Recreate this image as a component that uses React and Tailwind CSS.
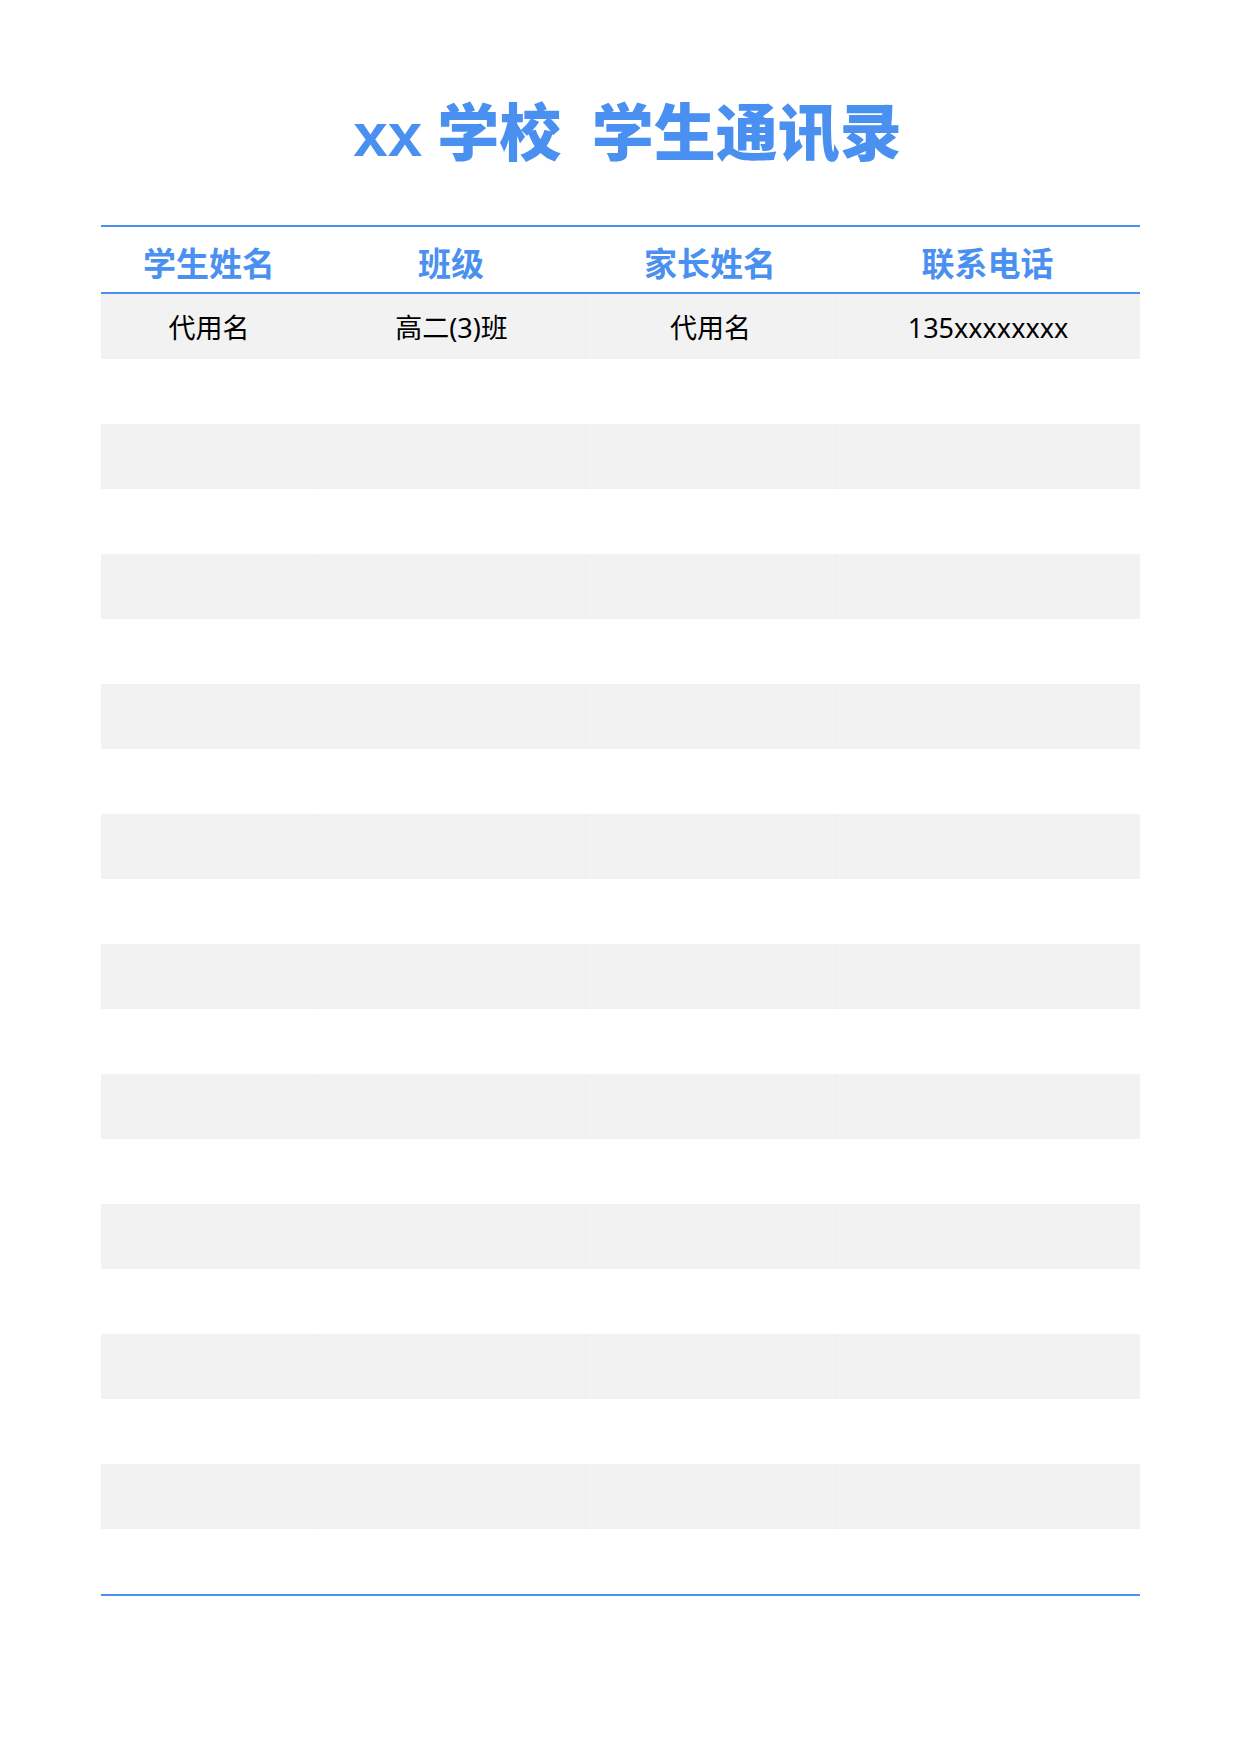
// App.jsx

import React from "react";

const headers = ["学生姓名", "班级", "家长姓名", "联系电话"];

const rows = Array.from({ length: 20 }, (_, i) =>
  i === 0 ? ["代用名", "高二(3)班", "代用名", "135xxxxxxxx"] : ["", "", "", ""]
);

export default function App() {
  return (
    <div
      className="w-[1241px] min-h-[1754px] bg-white px-[101px] pt-[104px]"
      style={{ fontFamily: '"Noto Sans", "Noto Sans CJK SC", sans-serif' }}
    >
      {/* Title */}
      <h1
        className="pl-[14px] text-center text-[62px] leading-[62px] font-black text-[#4a90f0] whitespace-pre [word-spacing:-2px]"
        style={{ fontFamily: '"Liberation Sans", "Noto Sans CJK SC", sans-serif' }}
      >
        xx 学校  学生通讯录
      </h1>

      {/* Table */}
      <div className="mt-[59px] w-[1039px]">
        <div className="h-[2px] bg-[#4a90f0]" />

        <div className="grid grid-cols-[216px_268px_250px_305px] h-[65px]">
          {headers.map((h) => (
            <div
              key={h}
              className="flex items-center justify-center pt-[6px] text-[33px] font-bold text-[#4a90f0]"
              style={{ fontFamily: '"Noto Sans CJK SC", sans-serif' }}
            >
              {h}
            </div>
          ))}
        </div>

        <div className="h-[2px] bg-[#4a90f0]" />

        {rows.map((row, i) => (
          <div
            key={i}
            className={
              i % 2 === 0
                ? "grid grid-cols-[216px_268px_250px_305px] h-[65px] bg-[#f2f2f2]"
                : "grid grid-cols-[216px_268px_250px_305px] h-[65px] bg-white"
            }
          >
            {row.map((cell, j) => (
              <div
                key={j}
                className={
                  j > 0 && i % 2 === 0
                    ? "flex items-center justify-center pt-[3px] text-[27px] text-black border-l border-[#eeeeee]"
                    : "flex items-center justify-center pt-[3px] text-[27px] text-black"
                }
              >
                {cell}
              </div>
            ))}
          </div>
        ))}

        <div className="h-[2px] bg-[#4a90f0]" />
      </div>
    </div>
  );
}
